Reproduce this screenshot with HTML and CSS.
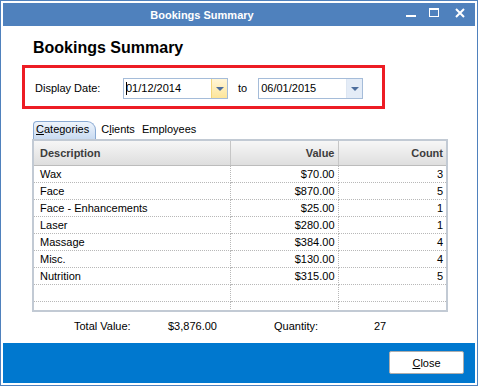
FILE: index.html
```html
<!DOCTYPE html>
<html lang="en">
<head>
  <meta charset="UTF-8" />
  <title>Bookings Summary</title>
  <link rel="stylesheet" href="styles.css">
</head>
<body>

  <div class="window">
    <div class="titlebar">
      <div class="title">Bookings Summary</div>
      <div class="controls">
        <svg width="74" height="22" viewBox="0 0 74 22">
          <!-- minimize -->
          <rect x="5" y="11" width="10" height="2" fill="#fff" />
          <!-- maximize -->
          <rect x="28.5" y="4.5" width="9" height="8" fill="none" stroke="#fff" />
          <rect x="28" y="4" width="10" height="2" fill="#fff" />
          <!-- close -->
          <path d="M55 5 L63 13 M63 5 L55 13" stroke="#fff" stroke-width="2" />
        </svg>
      </div>
    </div>

    <div class="content">
      <h1 class="heading">Bookings Summary</h1>

      <div class="date-box">
        <span class="date-label">Display Date:</span>
        <div class="combo active">
          <span class="combo-text"><span class="caret"></span>01/12/2014</span>
          <span class="combo-btn"><span class="arrow"></span></span>
        </div>
        <span class="to-label">to</span>
        <div class="combo">
          <span class="combo-text">06/01/2015</span>
          <span class="combo-btn"><span class="arrow"></span></span>
        </div>
      </div>

      <div class="tabs">
        <span class="tab selected"><u>C</u>ategories</span>
        <span class="tab">C<u>l</u>ients</span>
        <span class="tab">Employees</span>
      </div>

      <div class="grid">
        <table>
          <thead>
            <tr>
              <th class="col-desc">Description</th>
              <th class="col-value num">Value</th>
              <th class="col-count num">Count</th>
            </tr>
          </thead>
          <tbody>
            <tr><td>Wax</td><td class="num">$70.00</td><td class="num">3</td></tr>
            <tr><td>Face</td><td class="num">$870.00</td><td class="num">5</td></tr>
            <tr><td>Face - Enhancements</td><td class="num">$25.00</td><td class="num">1</td></tr>
            <tr><td>Laser</td><td class="num">$280.00</td><td class="num">1</td></tr>
            <tr><td>Massage</td><td class="num">$384.00</td><td class="num">4</td></tr>
            <tr><td>Misc.</td><td class="num">$130.00</td><td class="num">4</td></tr>
            <tr><td>Nutrition</td><td class="num">$315.00</td><td class="num">5</td></tr>
            <tr><td></td><td></td><td></td></tr>
            <tr><td></td><td></td><td></td></tr>
          </tbody>
        </table>
      </div>

      <div class="totals">
        <span class="total-label">Total Value:</span>
        <span class="total-value">$3,876.00</span>
        <span class="qty-label">Quantity:</span>
        <span class="qty-value">27</span>
      </div>
    </div>

    <div class="footer">
      <button class="close-btn"><u>C</u>lose</button>
    </div>
  </div>

</body>
</html>
```

FILE: styles.css
```css
/* Bookings summary dialog */
body {
  margin: 0;
  font-family: "Liberation Sans", Arial, sans-serif;
  font-size: 11px;
  color: #000;
  background: #fff;
}
.window {
  width: 478px;
  height: 386px;
  box-sizing: border-box;
  border: 1px solid #4f81bd;
  padding: 2px;
  background: #fff;
  display: flex;
  flex-direction: column;
}
.titlebar {
  height: 23px;
  background-color: #4f81bd;
  display: flex;
  align-items: center;
}
.title {
  flex: 1;
  text-align: center;
  color: #fff;
  font-weight: bold;
  font-size: 11px;
  padding-top: 1px;
}
.controls {
  width: 74px;
  height: 22px;
}
.controls svg {
  display: block;
}
.content {
  flex: 1;
  display: flex;
  flex-direction: column;
}
.heading {
  margin: 12px 0 0 30px;
  font-size: 16px;
  line-height: 20px;
  font-weight: bold;
}
.date-box {
  margin: 7px 0 0 19px;
  width: 363px;
  height: 44px;
  box-sizing: border-box;
  border: 3px solid #ed1c24;
  display: flex;
  align-items: center;
  padding: 2px 0 0 10px;
}
.date-label {
  width: 88px;
}
.to-label {
  margin: 0 11px 0 10px;
}
.combo {
  width: 105px;
  height: 21px;
  box-sizing: border-box;
  border: 1px solid #a5bcd9;
  display: flex;
  background: #fff;
}
.combo-text {
  flex: 1;
  padding-left: 2px;
  line-height: 19px;
  font-size: 11px;
  position: relative;
}
.caret {
  position: absolute;
  left: 2px;
  top: 3px;
  width: 1px;
  height: 13px;
  background: #000;
}
.combo-btn {
  width: 15px;
  border-left: 1px solid #dde6f2;
  background: #e4ecf7;
  display: flex;
  align-items: center;
  justify-content: center;
}
.combo.active .combo-btn {
  background: linear-gradient(#fff6d8, #fde59a);
  border-left-color: #f2d67c;
}
.arrow {
  width: 0;
  height: 0;
  border-left: 4px solid transparent;
  border-right: 4px solid transparent;
  border-top: 4px solid #4d6e9e;
  margin-top: 1px;
}
.tabs {
  margin: 12px 0 0 30px;
  height: 18px;
  display: flex;
  align-items: flex-end;
}
.tab {
  padding: 0 4px 2px 3px;
  line-height: 15px;
}
.tab.selected {
  background: linear-gradient(#eef4fc, #c9dbf1);
  border: 1px solid #8aaad3;
  border-bottom: none;
  border-radius: 4px 9px 0 0;
  padding: 0 6px 2px 2px;
  margin-right: 2px;
}
.grid {
  margin: 0 0 0 29px;
  width: 416px;
  height: 173px;
  box-sizing: border-box;
  border: 2px solid #c2cad4;
  overflow: hidden;
}
table {
  width: 100%;
  border-collapse: collapse;
  table-layout: fixed;
}
th {
  box-sizing: border-box;
  height: 24px;
  padding: 0 4px 0 6px;
  text-align: left;
  font-weight: bold;
  color: #3c3c3c;
  background: linear-gradient(#f6f6f6, #dedede);
  border-right: 1px solid #c6c6c6;
  border-bottom: 1px solid #bcbcbc;
}
th:last-child {
  border-right: none;
}
.col-desc {
  width: 196px;
}
.col-value {
  width: 108px;
}
td {
  height: 16px;
  padding: 0 3px 0 6px;
  border-right: 1px dotted #b8b8b8;
  border-bottom: 1px dotted #b8b8b8;
  white-space: nowrap;
}
td:last-child {
  border-right: none;
}
.num {
  text-align: right;
  padding-right: 3px;
}
.totals {
  display: flex;
  height: 26px;
  align-items: center;
  padding-top: 1px;
}
.total-label {
  margin-left: 71px;
  width: 94px;
}
.total-value {
  width: 106px;
}
.qty-label {
  width: 100px;
}
.footer {
  height: 40px;
  background-color: #0078cf;
  display: flex;
  justify-content: flex-end;
  align-items: flex-start;
  padding: 8px 11px 0 0;
  box-sizing: border-box;
}
.close-btn {
  width: 75px;
  height: 23px;
  font-family: "Liberation Sans", Arial, sans-serif;
  font-size: 11px;
  background: #fff;
  border: 1px solid #adadad;
  border-radius: 2px;
  padding: 0;
}
```
